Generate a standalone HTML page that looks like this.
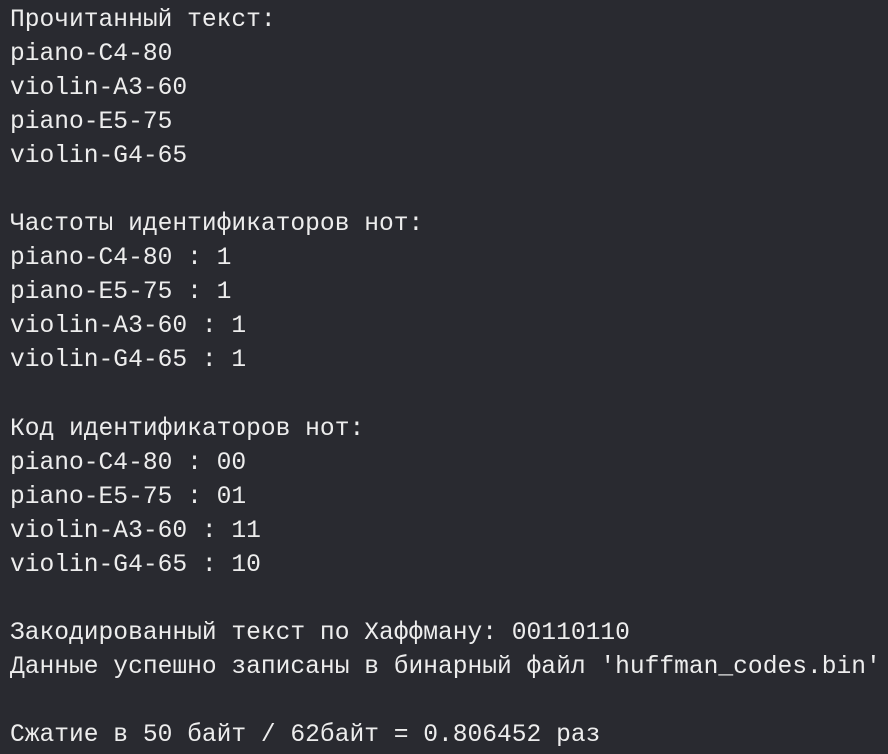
<!DOCTYPE html>
<html><head><meta charset="utf-8"><style>
html,body{margin:0;padding:0;background:#292a30;width:888px;height:754px;overflow:hidden}
pre{margin:0;padding:4px 0 0 10px;font-family:"Liberation Mono","DejaVu Sans Mono",monospace;font-size:24.6px;line-height:34.05px;color:#ededed;white-space:pre}
</style></head><body><pre>Прочитанный текст:
piano-C4-80
violin-A3-60
piano-E5-75
violin-G4-65

Частоты идентификаторов нот:
piano-C4-80 : 1
piano-E5-75 : 1
violin-A3-60 : 1
violin-G4-65 : 1

Код идентификаторов нот:
piano-C4-80 : 00
piano-E5-75 : 01
violin-A3-60 : 11
violin-G4-65 : 10

Закодированный текст по Хаффману: 00110110
Данные успешно записаны в бинарный файл 'huffman_codes.bin'

Сжатие в 50 байт / 62байт = 0.806452 раз</pre></body></html>
